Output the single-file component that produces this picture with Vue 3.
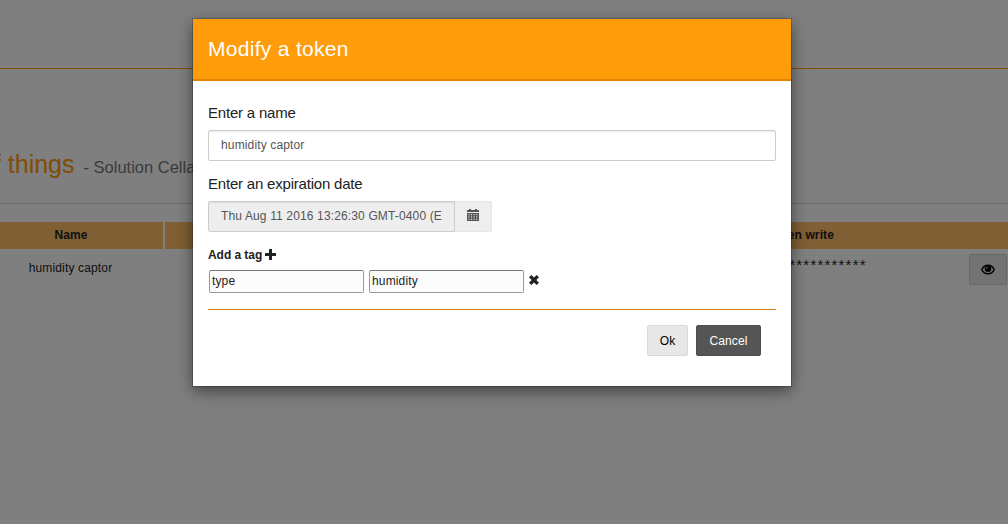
<script setup>
import { ref } from 'vue'

const name = ref('humidity captor')
const expiration = ref('Thu Aug 11 2016 13:26:30 GMT-0400 (E')
const tags = ref([{ key: 'type', value: 'humidity' }])
const stars = '*'.repeat(19)
const columns = [0, 1, 2, 3]
const rows = [0, 1, 2]
</script>

<template>
  <div class="screen">
    <div class="page">
      <header class="topbar"></header>
      <div class="heading">
        <h1><span class="of">of</span> things <small>- Solution Cellar</small></h1>
      </div>
      <div class="table">
        <div class="th">Name</div>
        <div class="th wide">Token write</div>
        <div class="td">humidity captor</div>
        <div class="td wide">
          <span class="stars">{{ stars }}</span>
          <button class="eye">
            <svg width="14" height="12" viewBox="0 0 14 12">
              <path d="M.8 5.500C2 2.600 4.300 1.200 7 1.200S12 2.600 13.200 5.500C12 8.400 9.700 9.800 7 9.800S2 8.400 .8 5.500z" fill="none" stroke="#000" stroke-width="1.500" />
              <circle cx="7" cy="4.800" r="3.300" fill="#000" />
              <path d="M5.300 4.800Q5.300 3.100 7 3.100" fill="none" stroke="#ccc" stroke-width="1" />
            </svg>
          </button>
        </div>
      </div>
    </div>
    <div class="backdrop"></div>
    <div class="modal">
      <div class="modal-header">Modify a token</div>
      <div class="modal-body">
        <label class="caption">Enter a name</label>
        <input v-model="name" class="control" type="text" />
        <label class="caption second">Enter an expiration date</label>
        <div class="group">
          <input :value="expiration" class="control date" type="text" readonly />
          <button class="addon">
            <svg width="12" height="12" viewBox="0 0 12 12">
              <path d="M0 1h2V0h2v1h4V0h2v1h2v2H0zM0 4h12v8H0z" fill="#555" />
              <g fill="#eee">
                <template v-for="r in rows" :key="r">
                  <rect v-for="c in columns" :key="c" :x="1.300 + c * 2.600" :y="5.100 + r * 2.300" width="1.200" height="1.100" />
                </template>
              </g>
            </svg>
          </button>
        </div>
        <div class="add">
          Add a tag
          <svg width="11" height="11" viewBox="0 0 11 11"><path d="M4 0h3v4h4v3H7v4H4V7H0V4h4z" fill="#222" /></svg>
        </div>
        <div v-for="tag in tags" :key="tag.key" class="tag">
          <input v-model="tag.key" type="text" />
          <input v-model="tag.value" type="text" />
          <svg width="10" height="10" viewBox="0 0 10 10"><path d="M2.300 0L5 2.600 7.700 0 10 2.200 7.300 5 10 7.800 7.700 10 5 7.400 2.300 10 0 7.800 2.700 5 0 2.200z" fill="#222" /></svg>
        </div>
        <div class="footer">
          <button class="btn ok">Ok</button>
          <button class="btn cancel">Cancel</button>
        </div>
      </div>
    </div>
  </div>
</template>

<style>
body { background: #fff; }
</style>

<style scoped>
.screen, .screen * { box-sizing: border-box; }
.screen {
  position: relative;
  width: 1008px;
  height: 524px;
  overflow: hidden;
  font: 12px/18px "Liberation Sans", Arial, sans-serif;
  color: #222;
}
button, input { font: inherit; margin: 0; }
.page { height: 524px; }
.topbar { height: 69px; border-bottom: 1px solid #ff9c0a; }
.heading {
  height: 135px;
  border-bottom: 1px solid #d0d0d0;
  padding-top: 75px;
  overflow: hidden;
}
h1 {
  margin: 0 0 0 -20px;
  font-weight: normal;
  font-size: 25px;
  line-height: 40px;
  color: #ff9c0a;
  white-space: nowrap;
}
h1 .of { color: #ee9988; }
h1 small { font-size: 16.500px; color: #777; margin-left: 2px; }
.table {
  margin-top: 18px;
  display: grid;
  grid-template-columns: 163px 843px;
  column-gap: 2px;
}
.th {
  height: 27px;
  line-height: 27px;
  background: #ffbf66;
  font-weight: bold;
  text-align: center;
  padding-right: 21px;
  letter-spacing: .1px;
}
.th.wide { padding: 0 0 0 428px; }
.td { padding-top: 10px; padding-right: 22px; text-align: center; letter-spacing: .15px; }
.td.wide {
  display: flex;
  justify-content: space-between;
  align-items: flex-start;
  padding: 5px 1px 0 568px;
}
.stars { font-size: 15px; line-height: 24px; margin-top: -1px; letter-spacing: 1.200px; }
.eye {
  width: 38px;
  height: 31px;
  padding: 0;
  border: 1px solid #d0d0d0;
  border-radius: 2px;
  background: #e7e7e7;
  display: flex;
  align-items: center;
  justify-content: center;
}
.backdrop { position: absolute; inset: 0; background: rgba(0, 0, 0, .5); }
.modal {
  position: absolute;
  left: 193px;
  top: 19px;
  width: 598px;
  height: 367px;
  background: #fff;
  box-shadow: 0 0 0 1px rgba(0, 0, 0, .2), 0 5px 15px rgba(0, 0, 0, .5);
}
.modal-header {
  height: 62px;
  padding: 0 15px;
  background: #ff9c0a;
  border-bottom: 2px solid #e08600;
  color: #fff;
  font-size: 21px;
  line-height: 60px;
  letter-spacing: .3px;
}
.modal-body { padding: 22px 15px 0; }
.caption { display: block; font-size: 15px; line-height: 20px; margin-bottom: 7px; letter-spacing: -.2px; }
.caption.second { margin-top: 13px; }
.control {
  display: block;
  width: 100%;
  height: 31px;
  padding: 0 12px 2px;
  border: 1px solid #ccc;
  border-radius: 2px;
  background: #fff;
  box-shadow: inset 0 1px 1px rgba(0, 0, 0, .075);
  color: #555;
  letter-spacing: .14px;
  outline: 0;
}
.group { display: flex; }
.control.date { width: 247px; background: #eee; border-radius: 2px 0 0 2px; }
.addon {
  width: 37px;
  height: 31px;
  padding: 0 0 3px;
  border: 1px solid #e6e6e6;
  border-left: 0;
  border-radius: 0 2px 2px 0;
  background: #eee;
  display: flex;
  align-items: center;
  justify-content: center;
}
.add { display: flex; align-items: center; gap: 3px; margin-top: 14px; font-weight: bold; letter-spacing: -.05px; }
.add svg { margin-bottom: 1px; }
.tag { display: flex; align-items: center; gap: 5px; margin: 6px 0 0 1px; }
.tag input {
  width: 155px;
  height: 23px;
  padding: 0 2px 2px;
  border: 1px solid #999;
  border-top-color: #777;
  border-radius: 2px;
  background: #fcfcfc;
  color: #222;
  letter-spacing: .14px;
  outline: 0;
}
.tag svg { margin-bottom: 3px; }
.footer {
  display: flex;
  justify-content: flex-end;
  gap: 8px;
  margin-top: 16px;
  padding: 15px 15px 0;
  border-top: 1px solid #d8860b;
}
.btn { height: 31px; padding: 0; border: 1px solid #dadada; border-radius: 2px; letter-spacing: .14px; }
.ok { width: 41px; background: #e7e7e7; color: #000; }
.cancel { width: 65px; background: #555; border-color: #4d4d4d; color: #fff; }
</style>
